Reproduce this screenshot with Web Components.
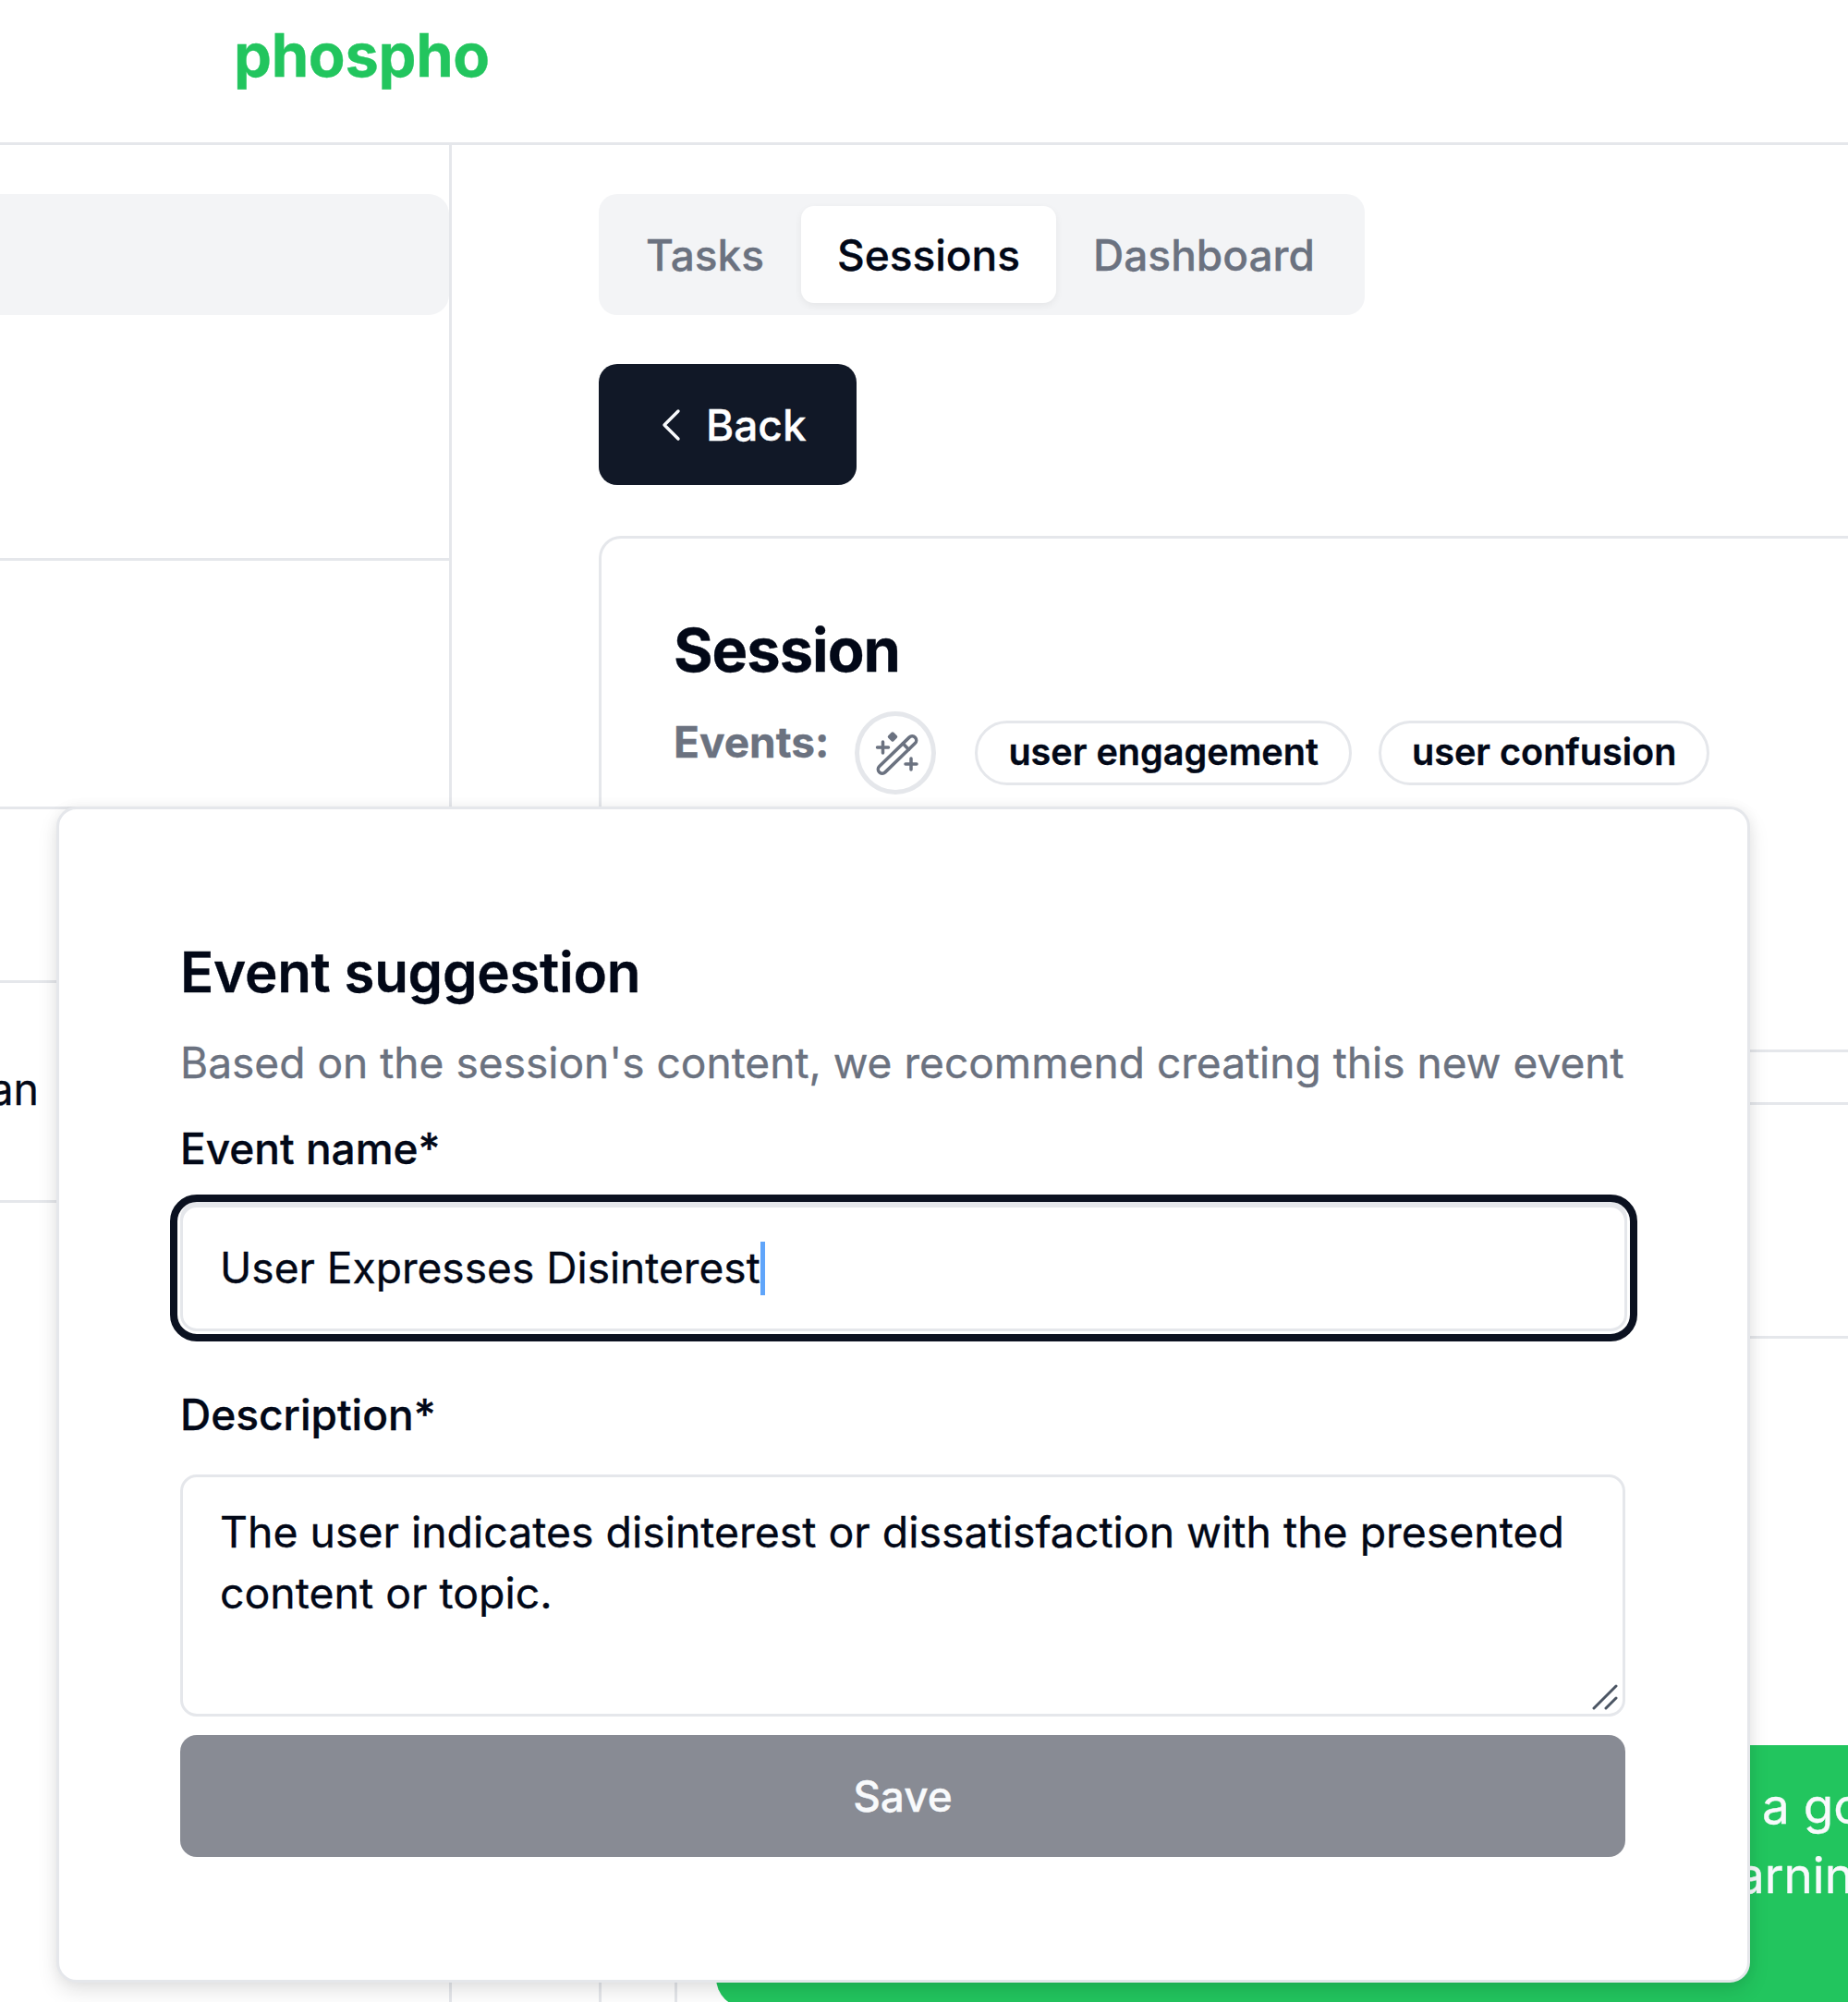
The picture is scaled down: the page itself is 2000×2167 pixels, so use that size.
<!DOCTYPE html>
<html>
<head>
<meta charset="utf-8">
<title>phospho</title>
<style>
  html, body { margin: 0; height: 2167px; overflow: hidden; background: #fff; }
  body { font-family: Inter, "Liberation Sans", sans-serif; color: #020817; -webkit-text-stroke: .35px; }
</style>
</head>
<body>
<app-shell>
  <app-header slot="header">phospho</app-header>
  <app-sidebar slot="sidebar"><span slot="row-text">an</span></app-sidebar>
  <tab-list slot="tabs"></tab-list>
  <back-button slot="back">Back</back-button>
  <session-card slot="card">
    <event-chip slot="chips">user engagement</event-chip>
    <event-chip slot="chips">user confusion</event-chip>
  </session-card>
  <suggestion-modal slot="modal"></suggestion-modal>
</app-shell>

<script>
const border = '#e5e7eb';
const ink = '#020817';

class AppShell extends HTMLElement {
  connectedCallback() {
    this.attachShadow({ mode: 'open' });
    this.shadowRoot.innerHTML = `
      <style>
        :host { display: block; position: relative; height: 2167px; overflow: hidden; }
        .body { display: flex; height: 2010px; }
        .content { flex: 1; min-width: 0; padding: 53px 0 0 159px; display: flex; flex-direction: column; align-items: flex-start; }
        .back { margin: 53px 0 55px; display: block; }
      </style>
      <slot name="header"></slot>
      <div class="body">
        <slot name="sidebar"></slot>
        <div class="content">
          <slot name="tabs"></slot>
          <div class="back"><slot name="back"></slot></div>
          <slot name="card"></slot>
        </div>
      </div>
      <slot name="modal"></slot>
    `;
  }
}

class AppHeader extends HTMLElement {
  connectedCallback() {
    this.attachShadow({ mode: 'open' });
    this.shadowRoot.innerHTML = `
      <style>
        :host { display: flex; align-items: center; height: 154px; padding-left: 253px; border-bottom: 3px solid ${border};
          color: #22c55e; font: 700 65px/1 Inter, sans-serif; letter-spacing: -.3px; }
        span { margin-top: -36px; }
      </style>
      <span><slot></slot></span>
    `;
  }
}

class AppSidebar extends HTMLElement {
  connectedCallback() {
    this.attachShadow({ mode: 'open' });
    this.shadowRoot.innerHTML = `
      <style>
        :host { display: block; flex: none; width: 486px; height: 2010px; border-right: 3px solid ${border}; font: 400 46.5px/1 Inter, sans-serif; color: ${ink}; }
        .bar { margin-top: 53px; height: 131px; background: #f3f4f6; border-radius: 0 22px 22px 0; }
        .row { border-bottom: 3px solid ${border}; }
        .r1 { height: 263px; }
        .r2 { height: 266px; }
        .r3 { height: 185px; }
        .r4 { height: 235px; display: flex; align-items: center; }
        .clip { width: 42px; margin-top: -4px; display: flex; justify-content: flex-end; overflow: hidden; }
      </style>
      <div class="bar"></div>
      <div class="row r1"></div>
      <div class="row r2"></div>
      <div class="row r3"></div>
      <div class="row r4"><div class="clip"><slot name="row-text"></slot></div></div>
    `;
  }
}

class TabList extends HTMLElement {
  connectedCallback() {
    this.attachShadow({ mode: 'open' });
    this.shadowRoot.innerHTML = `
      <style>
        :host { display: flex; box-sizing: border-box; width: 829px; height: 131px; padding: 13px; background: #f3f4f6; border-radius: 20px; }
        div { display: flex; align-items: center; justify-content: center; box-sizing: border-box; height: 105px; border-radius: 14px;
          font: 500 46px/1 Inter, sans-serif; color: #6b7280; }
        .tasks { width: 206px; padding-right: 2px; }
        .on { width: 276px; background: #fff; color: ${ink}; box-shadow: 0 3px 8px rgba(0,0,0,.06); }
        .dash { width: 320px; }
      </style>
      <div class="tasks">Tasks</div>
      <div class="on">Sessions</div>
      <div class="dash">Dashboard</div>
    `;
  }
}

class BackButton extends HTMLElement {
  connectedCallback() {
    this.attachShadow({ mode: 'open' });
    this.shadowRoot.innerHTML = `
      <style>
        :host { display: flex; align-items: center; box-sizing: border-box; width: 279px; height: 131px; padding-left: 67px; gap: 25px;
          background: #111827; border-radius: 20px; color: #fff; font: 500 46px/1 Inter, sans-serif; }
        svg { display: block; }
      </style>
      <svg width="24" height="36" viewBox="0 0 24 36" fill="none" stroke="#f8fafc" stroke-width="3.4" stroke-linecap="round" stroke-linejoin="round"><path d="M19 3 4 18l15 15"/></svg>
      <slot></slot>
    `;
  }
}

class EventChip extends HTMLElement {
  connectedCallback() {
    this.attachShadow({ mode: 'open' });
    this.shadowRoot.innerHTML = `
      <style>
        :host { display: inline-flex; align-items: center; justify-content: center; box-sizing: border-box; height: 70px; padding: 0 33px;
          border: 3px solid ${border}; border-radius: 35px; background: #fff; color: ${ink}; font: 600 39.6px/1 Inter, sans-serif; white-space: nowrap; }
      </style>
      <slot></slot>
    `;
  }
}

class SessionCard extends HTMLElement {
  connectedCallback() {
    this.attachShadow({ mode: 'open' });
    this.shadowRoot.innerHTML = `
      <style>
        :host { display: block; box-sizing: border-box; width: 1600px; flex: 1; border: 3px solid ${border}; border-right: 0; border-bottom: 0; border-radius: 24px 0 0 0; padding: 81px 0 0 78px; color: ${ink}; }
        h2 { margin: 0; font: 700 65px/80px Inter, sans-serif; letter-spacing: -1px; color: ${ink}; }
        .events { display: flex; align-items: center; margin-top: 26px; height: 90px; }
        .label { font: 700 46px/1 Inter, sans-serif; color: #6b7280; margin: -24px 28px 0 0; }
        .wand { flex: none; box-sizing: border-box; width: 88px; height: 90px; border: 5px solid ${border}; border-radius: 50%; margin-right: 42px; display: flex; align-items: center; justify-content: center; }
        .chips { display: flex; gap: 29px; }
        .table { margin: 276px 0 0 1px; border-left: 3px solid ${border}; height: 1050px; }
        .line { height: 0; border-top: 3px solid ${border}; }
        .l2 { margin-top: 54px; }
        .l3 { margin-top: 250px; }
        .bubble { margin: 440px 0 0 42px; box-sizing: border-box; width: 1300px; height: 284px; background: #22c55e; border-radius: 32px; color: #f8fafc; font: 400 53px/75px Inter, sans-serif; padding: 29px 0 0 1132px; white-space: nowrap; overflow: hidden; }
        .bubble div:last-child { margin-left: -27px; }
      </style>
      <h2>Session</h2>
      <div class="events">
        <div class="label">Events:</div>
        <div class="wand">
          <svg width="60" height="60" viewBox="0 0 60 60" fill="none" stroke="#6b7280" stroke-width="3.5" stroke-linecap="round" stroke-linejoin="round">
            <g transform="rotate(-44 32 32)">
              <rect x="5" y="27.500" width="54" height="9" rx="4.500"/>
              <path d="M45 27.500v9"/>
            </g>
            <path d="M10.500 24h12M16.500 18v12M41 42h12M47 36v12"/>
            <path d="M27 9l3.500 3.500L27 16l-3.500-3.500Z" fill="#6b7280"/>
          </svg>
        </div>
        <div class="chips"><slot name="chips"></slot></div>
      </div>
      <div class="table">
        <div class="line"></div>
        <div class="line l2"></div>
        <div class="line l3"></div>
        <div class="bubble"><div>a go</div><div>arnin</div></div>
      </div>
    `;
  }
}

class FormField extends HTMLElement {
  connectedCallback() {
    this.attachShadow({ mode: 'open' });
    this.shadowRoot.innerHTML = `
      <style>
        :host { display: block; }
        label { display: block; font: 500 46px/60px Inter, sans-serif; color: ${ink}; }
      </style>
      <label>${this.getAttribute('label')}</label>
      <slot></slot>
    `;
  }
}

class TextBox extends HTMLElement {
  connectedCallback() {
    this.attachShadow({ mode: 'open' });
    this.shadowRoot.innerHTML = `
      <style>
        :host { display: flex; align-items: center; box-sizing: border-box; height: 137px; margin: 31px -2px 0 0; padding-left: 40px;
          border: 3px solid ${border}; border-radius: 18px; background: #fff; color: ${ink}; font: 400 46.1px/1 Inter, sans-serif;
          outline: 8px solid #0b1120; outline-offset: 3px; box-shadow: 0 -3px 0 ${border}; }
        .caret { display: inline-block; width: 5px; height: 58px; background: #60a5fa; }
        .t { display: flex; align-items: center; }
      </style>
      <div class="t"><slot></slot><span class="caret"></span></div>
    `;
  }
}

class TextArea extends HTMLElement {
  connectedCallback() {
    this.attachShadow({ mode: 'open' });
    this.shadowRoot.innerHTML = `
      <style>
        :host { display: block; position: relative; box-sizing: border-box; height: 262px; margin-top: 35px; padding: 26px 30px 0 40px;
          border: 3px solid ${border}; border-radius: 18px; background: #fff; color: ${ink}; font: 400 46.4px/66px Inter, sans-serif; }
        svg { position: absolute; right: 5px; bottom: 4px; }
      </style>
      <slot></slot>
      <svg width="28" height="28" viewBox="0 0 28 28" fill="none" stroke="#4b5563" stroke-width="3" stroke-linecap="round"><path d="M2 26 26 2M15 26 26 15"/></svg>
    `;
  }
}

class SuggestionModal extends HTMLElement {
  connectedCallback() {
    this.attachShadow({ mode: 'open' });
    this.shadowRoot.innerHTML = `
      <style>
        :host { position: absolute; left: 61px; top: 873px; width: 1833px; height: 1273px; box-sizing: border-box; padding: 141px 132px 0 131px;
          background: #fff; border: 3px solid ${border}; border-radius: 22px; box-shadow: 0 10px 22px rgba(0,0,0,.10), 0 0 14px rgba(0,0,0,.05); }
        h3 { margin: 0; font: 600 60px/70px Inter, sans-serif; letter-spacing: -.25px; color: ${ink}; }
        p { margin: 28px 0 0; font: 400 46.1px/70px Inter, sans-serif; color: #6b7280; white-space: nowrap; }
        .name { margin-top: 28px; }
        .desc { margin-top: 60px; }
        button { display: block; width: 100%; height: 132px; margin-top: 20px; border: 0; border-radius: 18px; background: #888b94; color: #f8fafc; font: 500 46px/1 Inter, sans-serif; -webkit-text-stroke: .35px; }
      </style>
      <h3>Event suggestion</h3>
      <p>Based on the session's content, we recommend creating this new event</p>
      <form-field class="name" label="Event name*"><text-box>User Expresses Disinterest</text-box></form-field>
      <form-field class="desc" label="Description*"><text-area>The user indicates disinterest or dissatisfaction with the presented content or topic.</text-area></form-field>
      <button>Save</button>
    `;
  }
}

customElements.define('app-shell', AppShell);
customElements.define('app-header', AppHeader);
customElements.define('app-sidebar', AppSidebar);
customElements.define('tab-list', TabList);
customElements.define('back-button', BackButton);
customElements.define('event-chip', EventChip);
customElements.define('session-card', SessionCard);
customElements.define('form-field', FormField);
customElements.define('text-box', TextBox);
customElements.define('text-area', TextArea);
customElements.define('suggestion-modal', SuggestionModal);
</script>
</body>
</html>
